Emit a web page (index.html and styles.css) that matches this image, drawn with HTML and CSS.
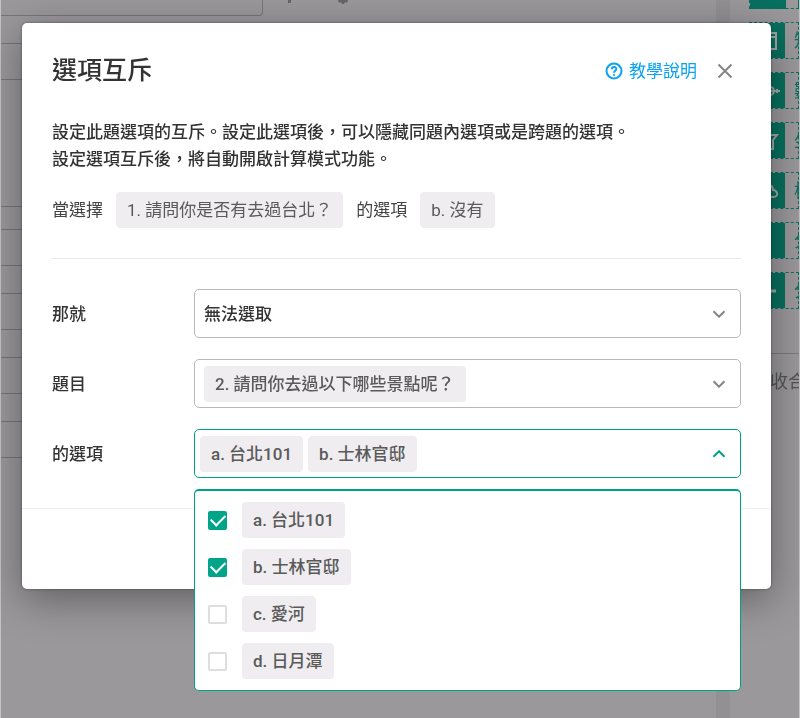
FILE: index.html
```html
<!DOCTYPE html>
<html lang="zh-Hant">
<head>
<meta charset="utf-8">
<meta name="viewport" content="width=device-width, initial-scale=1">
<title>選項互斥</title>
<link rel="stylesheet" href="styles.css">
</head>
<body>
<div class="page" aria-hidden="true">
  <div class="editor">
    <div class="topbar">
      <div class="question-box"></div>
      <svg class="tool-icon" viewBox="0 0 16 16"><path d="M9 0h3v3H9z"/></svg>
      <svg class="gear-icon" viewBox="0 0 16 16"><path d="M3 0h10l-1 3-2-1-1 2H7L6 2 4 3z"/></svg>
    </div>
    <div class="row-box first"></div>
    <div class="row-box gap"></div>
    <div class="row-box"></div>
    <div class="row-box"></div>
    <div class="row-box"></div>
    <div class="row-box"></div>
  </div>
  <div class="gutter"></div>
  <div class="tools">
    <div class="tool solid"></div>
    <div class="tool"><span class="tool-mark"><svg viewBox="0 0 24 24"><path d="M2 4h17v16H2zM2 8h17"/></svg></span><span>矩陣</span></div>
    <div class="tool"><span class="tool-mark"><svg viewBox="0 0 24 24"><path d="M1 12h22M20 10v4"/><circle cx="13" cy="12" r="4"/></svg></span><span>數值</span></div>
    <div class="tool"><span class="tool-mark"><svg viewBox="0 0 24 24"><path d="M4 6h16l-4 5v9h-3v-9z"/></svg></span><span>坐標</span></div>
    <div class="tool"><span class="tool-mark"><svg viewBox="0 0 24 24"><path d="M5 18h12q4-1 3-4-1-3-4-3 0-5-5-5"/></svg></span><span>檔案</span></div>
    <div class="tool"><span class="tool-mark"></span><span>分頁</span></div>
    <div class="tool"><span class="tool-mark"><svg viewBox="0 0 24 24"><path d="M2 12h17" stroke-width="3"/></svg></span><span>分隔</span></div>
    <div class="collapse">收合</div>
  </div>
</div>

<div class="overlay">
  <main class="dialog" role="dialog" aria-labelledby="dialog-title">
    <header class="dialog-head">
      <h1 id="dialog-title">選項互斥</h1>
      <a class="help" href="#">
        <svg viewBox="0 0 18 18" aria-hidden="true"><circle cx="9" cy="9" r="7.5"/><path d="M6.8 7.2C6.8 4.2 11.3 4.3 11.3 7C11.3 8.8 9 8.8 9 10.8"/><path d="M9 12.3v1.5"/></svg>
        教學說明
      </a>
      <button class="close" type="button" aria-label="關閉"><svg viewBox="0 0 16 16" aria-hidden="true"><path d="M1.500 1.500l13 13M14.500 1.500l-13 13"/></svg></button>
    </header>
    <div class="dialog-body">
      <p class="intro">設定此題選項的互斥。設定此選項後，可以隱藏同題內選項或是跨題的選項。<br>設定選項互斥後，將自動開啟計算模式功能。</p>
      <p class="condition"><span>當選擇</span><span class="chip">1. 請問你是否有去過台北？</span><span>的選項</span><span class="chip">b. 沒有</span></p>
      <hr>
      <form class="fields">
        <label for="action">那就</label>
        <div class="field">
          <select id="action" class="plain"><option>無法選取</option></select>
          <svg class="chevron" viewBox="0 0 14 8" aria-hidden="true"><path d="M1.500 1.200L7 6.700l5.500-5.500"/></svg>
        </div>
        <label for="question">題目</label>
        <div class="field">
          <select id="question" class="chip"><option>2. 請問你去過以下哪些景點呢？</option></select>
          <svg class="chevron" viewBox="0 0 14 8" aria-hidden="true"><path d="M1.500 1.200L7 6.700l5.500-5.500"/></svg>
        </div>
        <label for="options">的選項</label>
        <div class="picker">
          <button id="options" class="field open" type="button" aria-haspopup="true" aria-expanded="true">
            <span class="chip">a. 台北101</span><span class="chip">b. 士林官邸</span>
            <svg class="chevron" viewBox="0 0 14 8" aria-hidden="true"><path d="M1.500 6.800L7 1.300l5.500 5.500"/></svg>
          </button>
          <div class="menu">
            <label><input type="checkbox" checked><span class="chip">a. 台北101</span></label>
            <label><input type="checkbox" checked><span class="chip">b. 士林官邸</span></label>
            <label><input type="checkbox"><span class="chip">c. 愛河</span></label>
            <label><input type="checkbox"><span class="chip">d. 日月潭</span></label>
          </div>
        </div>
      </form>
    </div>
    <footer class="dialog-foot"></footer>
  </main>
</div>
</body>
</html>
```
FILE: styles.css
```css
* { box-sizing: border-box; }

body {
  margin: 0;
  background: #9a989b;
  color: #333;
  font-family: Roboto, "Noto Sans CJK TC", sans-serif;
  font-size: 17px;
  font-weight: 500;
  line-height: 26px;
}

button, select, input { font: inherit; color: inherit; }
svg { fill: none; stroke: currentColor; }

/* Dimmed page behind the dialog */
.page {
  position: fixed;
  inset: 0;
  display: flex;
  overflow: hidden;
  border-left: 1px solid #c4c3c5;
  border-right: 1px solid #c4c3c5;
}
.editor { flex: 1; }
.topbar { display: flex; gap: 16px; height: 43px; }
.question-box {
  width: 262px;
  height: 16px;
  border: 1px solid #777578;
  border-width: 0 1px 1px 0;
  border-radius: 0 0 4px 0;
}
.tool-icon, .gear-icon { width: 16px; height: 16px; fill: #666; stroke: none; }
.gear-icon { margin-left: 24px; }
.row-box {
  height: 37px;
  margin-bottom: 27px;
  border: 1px solid #777578;
  border-width: 1px 0;
}
.row-box.first { margin-bottom: 90px; }
.row-box.gap { margin-bottom: 22px; border-top: 0; }
.gutter { width: 14px; background: #929093; }
.tools {
  width: 69px;
  color: #08705f;
  font-size: 18px;
  font-weight: 400;
}
.tool {
  display: flex;
  align-items: center;
  gap: 9px;
  height: 37px;
  margin: 0 0 13px 19px;
  border: 1px dashed #08705f;
  white-space: nowrap;
}
.tool.solid { height: 9px; background: linear-gradient(90deg, #08705f 36px, transparent 36px); border-top: 0; }
.tool-mark {
  flex: none;
  display: flex;
  align-items: center;
  width: 35px;
  height: 100%;
  padding-left: 7px;
  background: #08705f;
  color: #a3a8a7;
}
.tool-mark svg { width: 24px; height: 24px; stroke-width: 2; }
.collapse {
  margin-top: 44px;
  padding: 15px 0 0 40px;
  border-top: 1px solid #7c7a7d;
  color: #555;
  white-space: nowrap;
}

/* Dialog */
.overlay {
  position: relative;
  padding: 23px 29px 129px 22px;
}
.dialog {
  background: #fff;
  border-radius: 5px;
  box-shadow: 0 10px 40px rgba(0, 0, 0, .38), 0 0 3px rgba(0, 0, 0, .4);
}
.dialog-head {
  display: flex;
  align-items: center;
  padding: 30px 38px 0 30px;
}
h1 {
  flex: 1;
  margin: 0;
  font-size: 25px;
  font-weight: 500;
  line-height: 36px;
}
.help {
  display: flex;
  align-items: center;
  gap: 6px;
  color: #0aa3f0;
  font-weight: 400;
  text-decoration: none;
}
.help svg { width: 18px; height: 18px; stroke-width: 2; }
.close {
  display: flex;
  margin-left: 20px;
  padding: 0;
  border: 0;
  background: none;
  color: #858585;
}
.close svg { width: 16px; height: 16px; stroke-width: 2; }

.dialog-body { padding: 30px; }
.intro { margin: 0 0 19px; line-height: 27px; }
.condition {
  display: flex;
  align-items: center;
  gap: 13px;
  margin: 0;
  color: #444;
  font-weight: 400;
}
.chip {
  display: inline-block;
  padding: 5px 11px;
  border: 0;
  border-radius: 4px;
  background: #efedf0;
  color: #5a5a5a;
  line-height: 26px;
}
hr {
  margin: 30px 0;
  border: 0;
  border-top: 1px solid #ebe9ec;
}
.fields {
  display: grid;
  grid-template-columns: 112px 1fr;
  gap: 21px 30px;
  align-items: center;
}
.field {
  display: flex;
  align-items: center;
  gap: 5px;
  width: 100%;
  height: 49px;
  padding: 0 14px 0 9px;
  border: 1px solid #b9b8ba;
  border-radius: 5px;
  background: #fff;
}
.field select { appearance: none; }
.plain {
  flex: 1;
  height: 46px;
  padding: 0;
  border: 0;
  background: none;
}
.chevron {
  flex: none;
  width: 14px;
  height: 8px;
  margin-left: auto;
  stroke: #858585;
  stroke-width: 2;
}
.picker { position: relative; }
.field.open { padding-left: 5px; border-color: #00a085; }
.open .chevron { stroke: #00a085; }

.menu {
  position: absolute;
  top: calc(100% + 11px);
  left: 0;
  right: 0;
  display: grid;
  gap: 11px;
  padding: 11px 13px;
  border: 1px solid #00a085;
  border-top-width: 2px;
  border-radius: 5px;
  background: #fff;
}
.menu label { display: flex; align-items: center; gap: 15px; }
.menu input {
  appearance: none;
  width: 19px;
  height: 19px;
  margin: 0;
  border: 2px solid #dfdde0;
  border-radius: 2px;
  background: #fff;
}
.menu input:checked {
  display: grid;
  place-items: center;
  border-color: #00a488;
  background: #00a488;
}
.menu input:checked::before {
  content: "";
  width: 12px;
  height: 7px;
  margin-bottom: 4px;
  border: solid #fff;
  border-width: 0 0 2px 2px;
  transform: rotate(-45deg);
}
.dialog-foot { height: 81px; border-top: 1px solid #f1eff2; }
```
